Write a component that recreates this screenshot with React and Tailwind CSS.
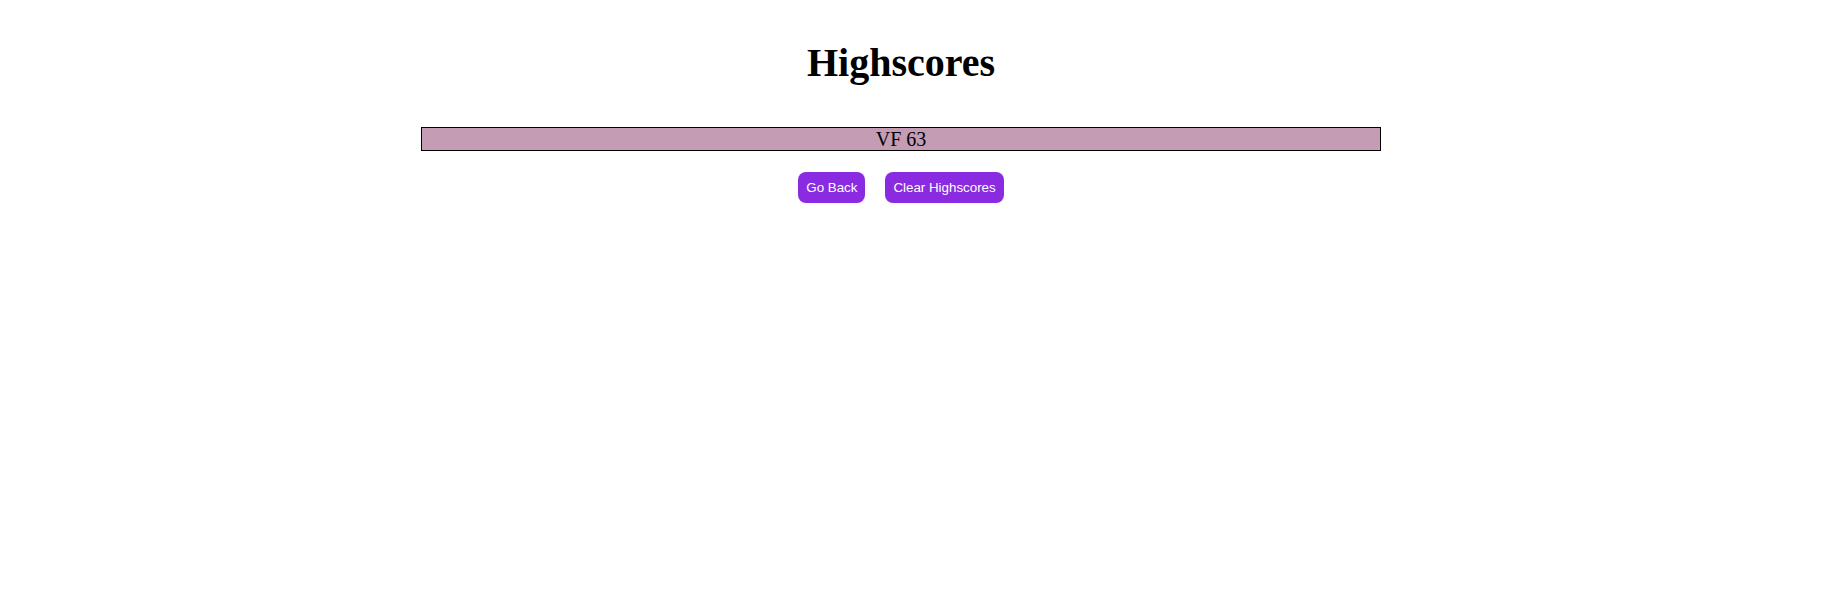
import React from "react";

export default function App() {
  return (
    <div className="min-h-[600px] w-full bg-white">
      <div className="w-[1802px] flex flex-col items-center pt-[40px]">
        <h1
          className="text-[40px] leading-[46px] font-bold text-black"
          style={{ fontFamily: '"Liberation Serif", "Times New Roman", serif' }}
        >
          Highscores
        </h1>

        {/* Score list */}
        <ul className="mt-[41px] w-[960px]">
          <li
            className="h-[24px] border border-black bg-[#c49cb4] text-center text-[20px] leading-[22px] text-black"
            style={{ fontFamily: '"Liberation Serif", "Times New Roman", serif' }}
          >
            VF 63
          </li>
        </ul>

        <div
          className="mt-[21px] flex gap-[20px]"
          style={{ fontFamily: '"Liberation Sans", Arial, sans-serif' }}
        >
          <button className="h-[31px] px-[8px] rounded-[8px] bg-[#8a2be2] text-white text-[13.33px]">
            Go Back
          </button>
          <button className="h-[31px] px-[8px] rounded-[8px] bg-[#8a2be2] text-white text-[13.33px]">
            Clear Highscores
          </button>
        </div>
      </div>
    </div>
  );
}
